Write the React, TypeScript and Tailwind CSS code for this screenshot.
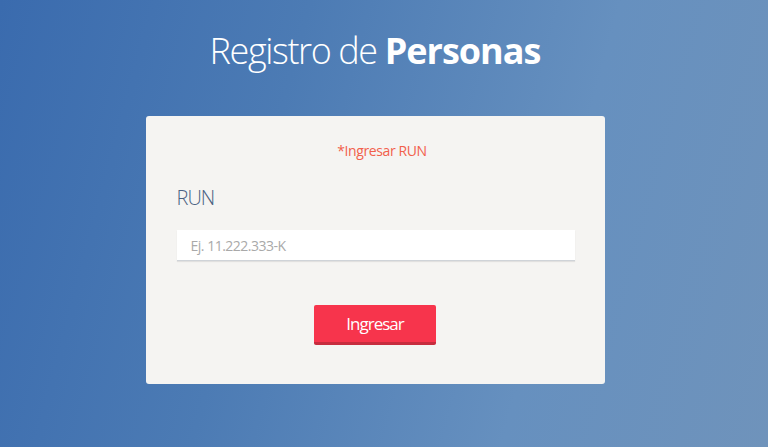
export default function App() {
  return (
    <div className="min-h-screen w-full bg-[linear-gradient(105deg,#3a6bae_0%,#4c7bb4_35%,#6690bf_70%,#6f93bb_100%)] font-['Open_Sans',sans-serif] flex flex-col items-center pt-[26px] pr-[18px]">
      <h1 className="text-white text-[36px] leading-[50px] font-light tracking-[-1.4px]">
        Registro de <span className="font-bold tracking-[-1px]">Personas</span>
      </h1>

      <div className="mt-[40px] w-[459px] h-[268px] bg-[#f5f4f2] rounded-[3px] px-[31px] pt-[26px]">
        <p className="text-center pl-[14px] text-[14px] leading-[18px] text-[#f2604b] tracking-[-0.4px]">
          *Ingresar RUN
        </p>

        <label className="block mt-[25px] text-[20px] leading-[26px] font-light text-[#4b6282] tracking-[-1px]">
          RUN
        </label>

        <input
          type="text"
          placeholder="Ej. 11.222.333-K"
          className="mt-[19px] block w-[398px] h-[31px] bg-white px-[14px] text-[14px] tracking-[-0.5px] text-[#555] placeholder:text-[#a9a9a9] outline-none border-b border-[#cfd3d8] shadow-[0_1px_1px_rgba(0,0,0,0.08)]"
        />

        <div className="flex justify-center mt-[44px]">
          <button className="w-[122px] h-[40px] bg-[#f7344c] border-b-[3px] border-[#c72c3e] rounded-[2px] text-white text-[17px] tracking-[-1px]">
            Ingresar
          </button>
        </div>
      </div>
    </div>
  );
}
